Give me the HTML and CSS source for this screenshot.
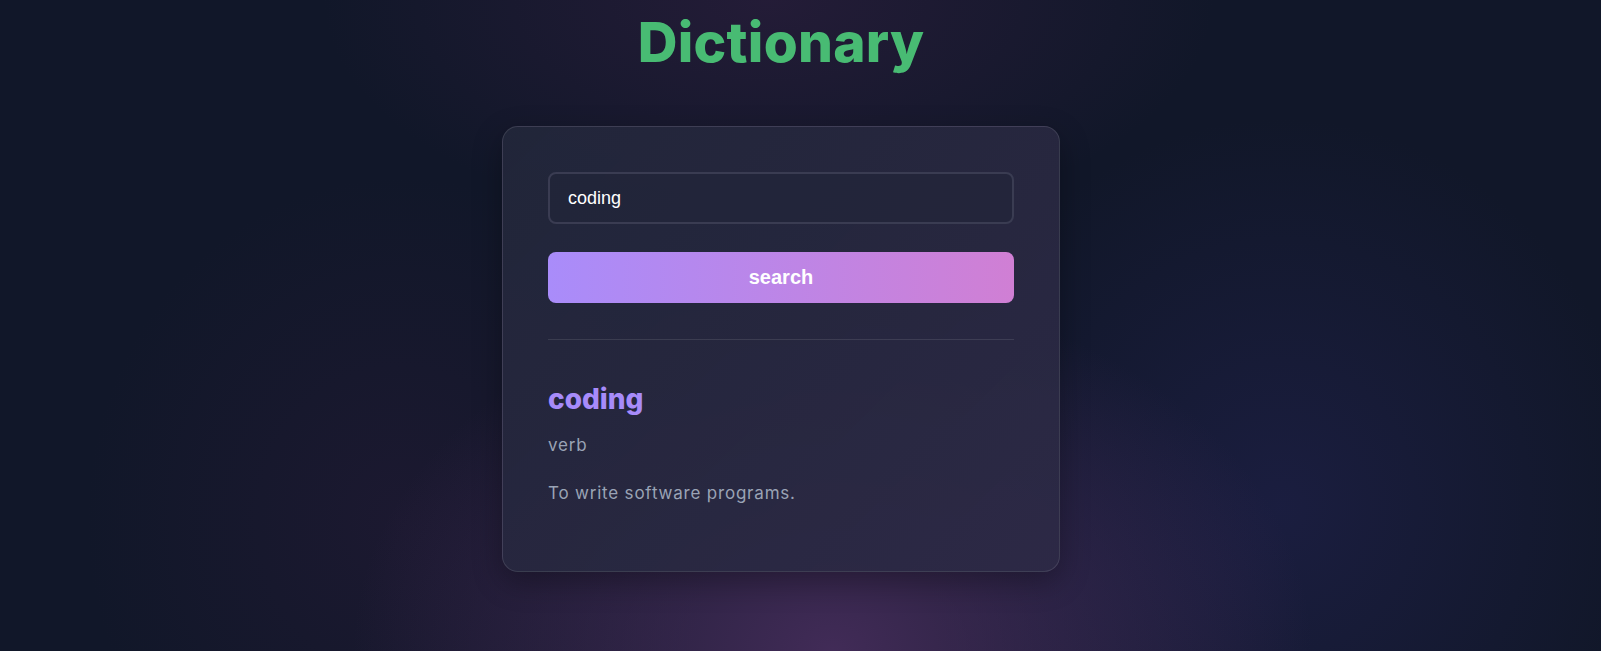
FILE: index.html
```html
<!DOCTYPE html>
<html lang="en">
<head>
<meta charset="utf-8">
<title>Dictionary</title>
<link rel="stylesheet" href="styles.css">
</head>
<body>
<main class="page">
  <h1 class="title">Dictionary</h1>
  <section class="card">
    <div class="search-box">
      <input class="search-input" type="text" value="coding">
    </div>
    <button class="search-btn" type="button">search</button>
    <hr class="divider">
    <div class="result">
      <h2 class="word">coding</h2>
      <p class="pos">verb</p>
      <p class="definition">To write software programs.</p>
    </div>
  </section>
</main>
</body>
</html>
```

FILE: styles.css
```css
html, body {
  margin: 0;
  padding: 0;
  height: 100%;
}

body {
  font-family: Inter, "Noto Sans", sans-serif;
  background:
    radial-gradient(ellipse 640px 480px at 52% 100%, rgba(105, 60, 125, 0.55), rgba(105, 60, 125, 0) 75%),
    radial-gradient(ellipse 480px 520px at 80% 78%, rgba(42, 40, 100, 0.38), rgba(42, 40, 100, 0) 75%),
    radial-gradient(ellipse 420px 460px at 25% 80%, rgba(60, 30, 70, 0.25), rgba(60, 30, 70, 0) 75%),
    radial-gradient(ellipse 620px 320px at 48% 0%, rgba(75, 38, 85, 0.32), rgba(75, 38, 85, 0) 72%),
    #111729;
  overflow: hidden;
}

.page {
  display: flex;
  flex-direction: column;
  align-items: center;
  padding-right: 39px;
}

.title {
  margin: 0;
  font-size: 55px;
  line-height: 84px;
  font-weight: 800;
  letter-spacing: 0.005em;
  color: #48bb73;
}

.card {
  box-sizing: border-box;
  width: 558px;
  margin-top: 42px;
  padding: 45px 45px 45px;
  border: 1px solid rgba(255, 255, 255, 0.11);
  border-radius: 16px;
  background: linear-gradient(135deg, rgba(34, 38, 58, 0.96), rgba(45, 42, 70, 0.92));
  box-shadow: 0 10px 30px rgba(0, 0, 0, 0.3);
}

.search-box {
  display: flex;
}

.search-input {
  box-sizing: border-box;
  width: 100%;
  height: 52px;
  padding: 0 18px;
  border: 2px solid #3a3c52;
  border-radius: 8px;
  background: rgba(34, 36, 56, 0.6);
  color: #ffffff;
  font-family: "Liberation Sans", Arial, sans-serif;
  font-size: 18px;
  outline: none;
}

.search-btn {
  display: block;
  box-sizing: border-box;
  width: 100%;
  height: 51px;
  margin-top: 28px;
  border: none;
  border-radius: 8px;
  background: linear-gradient(90deg, #a98cfa, #d07fd4);
  color: #ffffff;
  font-family: "Liberation Sans", Arial, sans-serif;
  font-size: 20px;
  font-weight: 700;
  cursor: pointer;
}

.divider {
  margin: 36px 0 0;
  border: none;
  height: 1px;
  background: rgba(255, 255, 255, 0.1);
}

.result {
  padding-top: 42px;
}

.word {
  margin: 0;
  font-size: 28px;
  line-height: 34px;
  font-weight: 800;
  color: #a78bfa;
}

.pos {
  margin: 17px 0 0;
  font-size: 17px;
  line-height: 24px;
  letter-spacing: 0.8px;
  color: #9aa3b5;
}

.definition {
  margin: 24px 0 21px;
  font-size: 17px;
  line-height: 24px;
  letter-spacing: 0.8px;
  color: #9aa3b5;
}
```
